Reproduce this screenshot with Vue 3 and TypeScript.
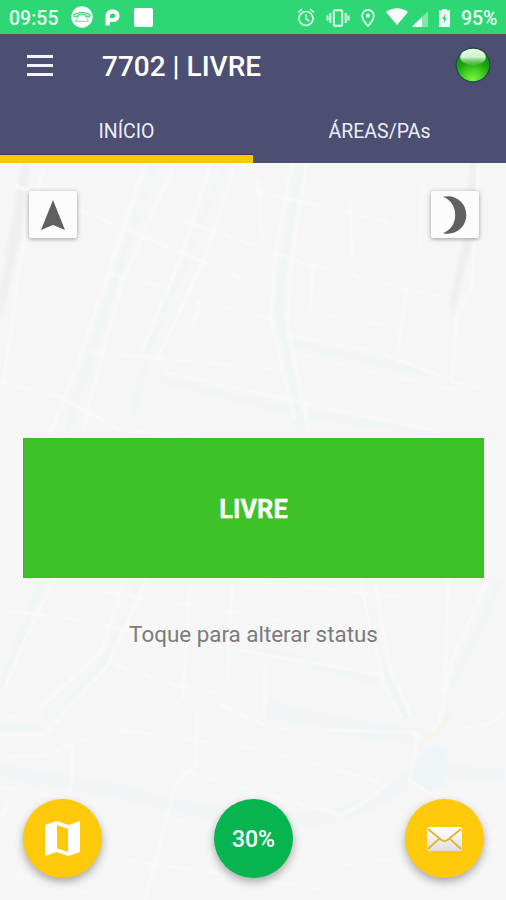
<script setup lang="ts">
import { ref } from 'vue'

const unit = '7702'
const status = ref('LIVRE')
const tabs = ['INÍCIO', 'ÁREAS/PAs']
const active = ref(0)

const waterways = [
  { d: 'M129 240 Q100 320 66 435', w: 7 },
  { d: 'M155 164 L129 240', w: 5 },
  { d: 'M225 164 L190 250 L148 352 L128 435', w: 5 },
  { d: 'M302 164 L285 255 L279 310 L300 430', w: 6 },
  { d: 'M287 342 L370 360 L465 382', w: 7 },
  { d: 'M160 379 L292 412 L440 434', w: 8 },
  { d: 'M40 585 L24 630 L0 690', w: 8 },
  { d: 'M138 585 L104 664 L65 702 L38 727 L0 729', w: 5 },
  { d: 'M200 644 L285 656 L376 680', w: 8 },
  { d: 'M364 590 L380 665 L407 720', w: 7 },
  { d: 'M500 580 L475 640 L450 690', w: 6 },
  { d: 'M265 708 Q340 727 425 738', w: 16 },
  { d: 'M0 770 Q60 782 125 792 Q250 830 335 816 Q390 800 430 760', w: 14 },
  { d: 'M430 769 L506 776', w: 12 },
]
const streets = [
  'M45 164 L22 250 L3 385', 'M145 164 L108 275 L72 380 L50 435',
  'M174 164 L122 282 L82 430', 'M210 164 L180 260 L142 350', 'M235 164 L205 258 L157 360',
  'M292 164 L275 255 L271 320 L295 420', 'M306 164 L291 265 L287 325 L309 430',
  'M478 164 L472 285 L456 320 L452 380', 'M0 180 L100 218 L255 284 M110 274 L165 287',
  'M180 220 L310 265 L450 299', 'M225 307 L276 321 M90 352 L275 369',
  'M285 335 L370 350 L463 384 L506 395', 'M290 352 L370 372 L456 390',
  'M0 382 L60 397 L120 430 L200 437', 'M165 372 L290 400 L440 432',
  'M200 300 L192 330 M313 260 L310 312 L400 328', 'M407 290 L397 355',
  'M258 180 L262 240 M350 200 L352 260 M422 180 L420 250', 'M250 190 L390 222',
  'M55 578 L20 650 L4 690', 'M125 578 L102 650 L38 710 L0 720', 'M147 578 L108 665 L44 735 L0 735',
  'M0 610 L60 617 L140 633 L240 650 L380 675', 'M90 590 L160 600 L280 620 M240 580 L430 600',
  'M115 665 L178 686 L230 695', 'M190 585 L183 700 M232 580 L228 680', 'M265 665 L265 720',
  'M360 580 L384 683 L402 718', 'M375 583 L390 668 L413 720', 'M448 578 L444 700 Q440 730 424 739 L412 735',
  'M488 580 L452 660 L446 690', 'M220 704 L270 728 L420 733', 'M120 730 L182 738 L265 750 L380 782',
  'M0 758 L48 755 Q80 738 130 731', 'M0 787 L76 800 M73 745 L70 795', 'M197 710 L196 765 L176 782 L145 900',
  'M418 735 L410 780 L440 800', 'M180 770 L340 815 Q365 805 385 785', 'M448 730 L490 724 L506 710',
  'M0 820 L8 800', 'M175 820 L230 830 M340 865 L506 845', 'M0 870 L95 895 M125 860 L330 890',
]
</script>

<template>
  <main class="screen">
    <header class="status-bar">
      <span class="clock">09:55</span>
      <svg class="ico-call" width="22" height="22" viewBox="0 0 22 22">
        <circle cx="11" cy="11" r="10.7" fill="#fff" />
        <path d="M2.5 8.8Q11 4 19.5 8.8L18.8 11 15 10.5 14.5 9Q11 8.3 7.5 9L7 10.5 3.2 11Z" fill="#b4edcc" stroke="#35cf76" stroke-width="1" />
        <path d="M7.5 10.5 4.5 15.3H17.5L14.5 10.5" fill="none" stroke="#6fdca0" stroke-width="1" />
      </svg>
      <svg class="ico-p" width="15" height="19" viewBox="0 0 15 19">
        <path fill="#fff" fill-rule="evenodd" d="M.5 17.5V8.5C.5 4 3.3 1.5 7.6 1.5S14.5 4 14.5 7.8 11.8 14 8 14H5V16Q5 17.5 3.5 17.5ZM5 10H7.5C9.3 10 10.3 9.2 10.3 7.8S9.3 5.6 7.6 5.6 5 6.6 5 8.2Z" />
      </svg>
      <i class="square"></i>
      <span class="spacer"></span>
      <svg class="ico-alarm" width="18" height="19" viewBox="0 0 18 19" fill="none" stroke="#dcfce9">
        <circle cx="9" cy="10.5" r="7" stroke-width="1.7" />
        <path d="M9 6.3V11L12.3 13M1 4.5 5 1.2M17 4.5 13 1.2" stroke-width="1.5" />
      </svg>
      <svg class="ico-vibrate" width="24" height="18" viewBox="0 0 24 18" fill="none" stroke="#dcfce9">
        <rect x="7.8" y="1.3" width="8.4" height="15.4" rx="1" stroke-width="2" />
        <path d="M4.3 4V14M1.5 6.5V11.5M19.7 4V14M22.5 6.5V11.5" stroke-width="2" />
      </svg>
      <svg class="ico-pin" width="14" height="18" viewBox="0 0 14 18">
        <path d="M7 1C3.7 1 1.2 3.5 1.2 6.7 1.2 10.8 7 17 7 17S12.8 10.8 12.8 6.7C12.8 3.5 10.3 1 7 1Z" fill="none" stroke="#dcfce9" stroke-width="1.8" />
        <circle cx="7" cy="6.7" r="2.1" fill="#dcfce9" />
      </svg>
      <svg class="ico-wifi" width="22" height="17" viewBox="0 0 22 17"><path d="M0 4Q11-3.5 22 4L11 17Z" fill="#fff" /></svg>
      <svg class="ico-signal" width="16" height="16" viewBox="0 0 16 16">
        <path d="M0 16 16 0V16Z" fill="#fff" opacity=".4" /><path d="M0 16 10 6V16Z" fill="#fff" />
      </svg>
      <svg class="ico-battery" width="11" height="18" viewBox="0 0 11 18">
        <path d="M3 0H8V1.5H11V18H0V1.5H3Z" fill="#f4fff8" /><path d="M6.8 4.5 3 10H5.2L4.3 14.5 8 9H6Z" fill="#45c67c" />
      </svg>
      <span class="battery-level">95%</span>
    </header>

    <div class="toolbar">
      <button class="menu" aria-label="Menu"><i></i><i></i><i></i></button>
      <h1>{{ unit }} | {{ status }}</h1>
      <svg class="led" width="36" height="36" viewBox="0 0 36 36">
        <defs>
          <radialGradient id="ledBody" cx=".5" cy=".95" r=".85">
            <stop offset="0" stop-color="#7df545" /><stop offset=".35" stop-color="#49d324" /><stop offset=".65" stop-color="#1ba512" /><stop offset="1" stop-color="#128a12" />
          </radialGradient>
          <linearGradient id="ledShine" x1="0" y1="0" x2="0" y2="1">
            <stop offset="0" stop-color="#e6fbe2" /><stop offset=".5" stop-color="#d3f3cf" /><stop offset="1" stop-color="#6bcb60" stop-opacity=".35" />
          </linearGradient>
        </defs>
        <circle cx="18" cy="18" r="17.4" fill="#1f4345" />
        <circle cx="18" cy="18" r="16.3" fill="url(#ledBody)" />
        <ellipse cx="18" cy="10" rx="12.8" ry="8.2" fill="url(#ledShine)" />
      </svg>
    </div>

    <nav class="tabs">
      <button v-for="(tab, i) in tabs" :key="tab" :class="['tab', { active: active === i }]" @click="active = i">
        <span>{{ tab }}</span>
      </button>
    </nav>

    <section class="content">
      <svg class="map" width="506" height="737" viewBox="0 163 506 737" fill="none">
        <path d="M30 164 20 240 0 325V290L22 163ZM463 240 470 163H480L472 245 452 320 450 300Z" fill="#efefef" />
        <path v-for="way in waterways" :key="way.d" :d="way.d" :stroke-width="way.w" stroke="#f1f5f6" />
        <path d="M425 745H448L446 784 428 792 412 780Z" fill="#eff4f7" />
        <path v-for="street in streets" :key="street" :d="street" stroke="#f9f9f9" stroke-width="3.2" />
        <path d="M448 713Q445 730 425 738" stroke="#f5f3e9" stroke-width="4" />
      </svg>

      <div class="map-tools">
        <button class="tool" aria-label="Localização">
          <svg width="24" height="30" viewBox="0 0 24 30"><path d="M12 0 24 30 12 25 0 30Z" fill="#606060" /></svg>
        </button>
        <button class="tool" aria-label="Modo noturno">
          <svg width="24" height="38" viewBox="0 0 24 38"><path d="M0 .8C13-2 23.3 7 23.3 19S13 40 0 37.2C8 34 12.2 27 12.2 19S8 4 0 .8Z" fill="#606060" /></svg>
        </button>
      </div>

      <button class="status-button"><span>{{ status }}</span></button>
      <p class="hint">Toque para alterar status</p>

      <footer class="actions">
        <button class="fab" aria-label="Mapa">
          <svg width="35" height="35" viewBox="0 0 35 35">
            <path fill="#fff" fill-rule="evenodd" d="M0 4 11.5 0 23.5 4 35 0V31L23.5 35 11.5 31 0 35ZM12 4V27.3L23 31V7.7Z" />
          </svg>
        </button>
        <button class="fab percent"><span>30%</span></button>
        <button class="fab" aria-label="Mensagens">
          <svg width="35" height="24" viewBox="0 0 35 24">
            <defs>
              <linearGradient id="paper" x1="0" y1="0" x2="0" y2="1">
                <stop offset="0" stop-color="#fff" /><stop offset="1" stop-color="#dedede" />
              </linearGradient>
            </defs>
            <rect width="35" height="24" rx="1.5" fill="url(#paper)" />
            <path d="M1 2 14.5 13Q17.5 15.5 20.5 13L34 2M1 22 12.5 11.5M34 22 22.5 11.5" fill="none" stroke="#dfb52e" stroke-width="1.7" />
          </svg>
        </button>
      </footer>
    </section>
  </main>
</template>

<style>
body { margin: 0; }
</style>

<style scoped>
* { box-sizing: border-box; }
.screen {
  display: flex;
  flex-direction: column;
  width: 506px;
  height: 900px;
  overflow: hidden;
  background: #f6f6f6;
  font-family: Roboto, "Liberation Sans", sans-serif;
}
button {
  padding: 0;
  border: 0;
  background: none;
  font: inherit;
  color: inherit;
}
svg { display: block; flex: none; }
.status-bar {
  display: flex;
  align-items: center;
  height: 34px;
  padding: 1px 8px 0 9px;
  background: #2fd675;
  color: #e9fff2;
  font-size: 19.5px;
  font-weight: 500;
}
.clock { width: 62px; padding-top: 1px; }
.ico-call { margin-top: -1px; }
.ico-p { margin-left: 12px; }
.square { width: 19px; height: 19px; margin-left: 14px; border-radius: 2px; background: #fff; }
.spacer { flex: 1; }
.ico-vibrate { margin-left: 11px; }
.ico-pin { margin-left: 11px; }
.ico-wifi { margin: -2px 0 0 11px; }
.ico-signal { margin: 2px 0 0 4px; }
.ico-battery { margin-left: 11px; }
.battery-level { width: 37px; margin-left: 11px; padding-top: 1px; white-space: nowrap; letter-spacing: -.1px; }
.toolbar {
  display: flex;
  align-items: center;
  height: 63px;
  padding: 0 15px 0 27px;
  background: #4c4f72;
  color: #fff;
}
.menu { display: flex; flex-direction: column; gap: 6px; width: 26px; }
.menu i { height: 3px; background: #f5f5ff; }
h1 { flex: 1; margin: 2px 0 0 49px; font-size: 28px; font-weight: 500; line-height: 32px; }
.led { margin-top: -1px; }
.tabs { display: flex; height: 66px; background: #4c4f72; }
.tab {
  display: flex;
  flex: 1;
  justify-content: center;
  padding-top: 22px;
  color: #eceef8;
  font-size: 19.5px;
  line-height: 25px;
}
.tab.active { border-bottom: 8px solid #fdc70a; box-shadow: inset 0 -1px #383b4c; }
.content {
  position: relative;
  display: flex;
  flex: 1;
  flex-direction: column;
  padding: 28px 22px 22px 23px;
  overflow: hidden;
}
.content > :not(.map) { position: relative; }
.map { position: absolute; inset: 0; filter: blur(.8px); }
.map-tools { display: flex; justify-content: space-between; padding: 0 5px 0 6px; }
.tool {
  display: grid;
  place-items: center;
  width: 48px;
  height: 47px;
  border-radius: 2px;
  background: #fcfcfc;
  box-shadow: 0 1px 4px rgb(0 0 0 / 38%);
}
.status-button {
  height: 140px;
  margin-top: 200px;
  background: #3ec228;
  box-shadow: inset 0 0 0 1px #38ba24;
  color: #fff;
  font-size: 25.5px;
  font-weight: 700;
}
.status-button span { display: block; padding-top: 2px; -webkit-text-stroke: .3px #fff; }
.hint { margin: 42px 0 0; color: #7b7c7c; font-size: 22.4px; line-height: 28px; text-align: center; }
.actions { display: flex; justify-content: space-between; margin-top: auto; }
.fab {
  display: grid;
  place-items: center;
  width: 79px;
  height: 79px;
  border-radius: 50%;
  background: #fec90b;
  box-shadow: 0 4px 8px rgb(0 0 0 / 32%);
}
.percent { background: #06b550; color: #fff; font-size: 23px; font-weight: 500; }
.percent span { padding-top: 2px; }
</style>
